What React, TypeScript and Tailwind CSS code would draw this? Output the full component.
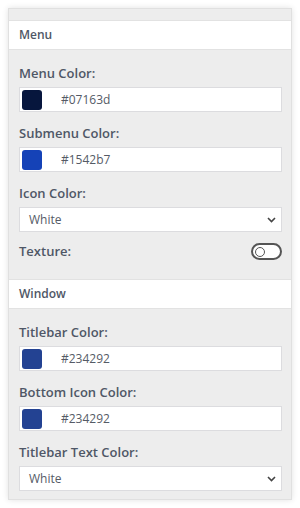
import React from "react";

function ColorField({ label, color }: { label: string; color: string }) {
  return (
    <div className="flex flex-col">
      <div className="h-[17px] text-[13px] leading-[17px] font-semibold text-[#4f5766]">{label}</div>
      <div className="mt-[5px] h-[25px] flex items-center bg-white border border-[#dcdcdf] pl-[2px]">
        <div className="w-[20px] h-[20px] rounded-[3px]" style={{ backgroundColor: color }} />
        <span className="ml-[19px] text-[12px] text-[#555b66]">{color}</span>
      </div>
    </div>
  );
}

function SelectField({ label, value }: { label: string; value: string }) {
  return (
    <div className="flex flex-col">
      <div className="h-[17px] text-[13px] leading-[17px] font-semibold text-[#4f5766]">{label}</div>
      <div className="mt-[5px] h-[25px] flex items-center justify-between bg-white border border-[#dcdcdf] pl-[9px] pr-[5px]">
        <span className="text-[12px] text-[#555b66]">{value}</span>
        <svg width="9" height="6" viewBox="0 0 9 6" fill="none">
          <path d="M1 1l3.5 3.5L8 1" stroke="#444" strokeWidth="1.6" />
        </svg>
      </div>
    </div>
  );
}

function Header({ title }: { title: string }) {
  return (
    <div className="h-[30px] bg-white border-y border-[#e2e2e2] flex items-center pl-[10px] text-[12px] font-semibold text-[#4f5766]">
      {title}
    </div>
  );
}

export default function App() {
  return (
    <div className="w-[300px] h-[508px] bg-white pt-[8px] pl-[8px]" style={{ fontFamily: '"Open Sans", sans-serif' }}>
      <div className="w-[284px] h-[492px] bg-[#ededed] border border-[#e0e0e0] shadow-[0_0_6px_rgba(0,0,0,0.12)] pt-[11px] flex flex-col">
        <Header title="Menu" />
        <div className="pl-[10px] pr-[9px] pt-[15px] flex flex-col gap-[13px]">
          <ColorField label="Menu Color:" color="#07163d" />
          <ColorField label="Submenu Color:" color="#1542b7" />
          <SelectField label="Icon Color:" value="White" />
        </div>
        <div className="pl-[10px] pr-[9px] mt-[11px] h-[17px] flex items-center justify-between">
          <span className="text-[13px] font-semibold text-[#4f5766]">Texture:</span>
          <div className="w-[31px] h-[17px] rounded-full border-2 border-[#555] bg-white flex items-center pl-[2px]">
            <div className="w-[10px] h-[10px] rounded-full border-[1.5px] border-[#555]" />
          </div>
        </div>
        <div className="mt-[19px]">
          <Header title="Window" />
        </div>
        <div className="pl-[10px] pr-[9px] pt-[15px] flex flex-col gap-[13px]">
          <ColorField label="Titlebar Color:" color="#234292" />
          <ColorField label="Bottom Icon Color:" color="#234292" />
          <SelectField label="Titlebar Text Color:" value="White" />
        </div>
      </div>
    </div>
  );
}
